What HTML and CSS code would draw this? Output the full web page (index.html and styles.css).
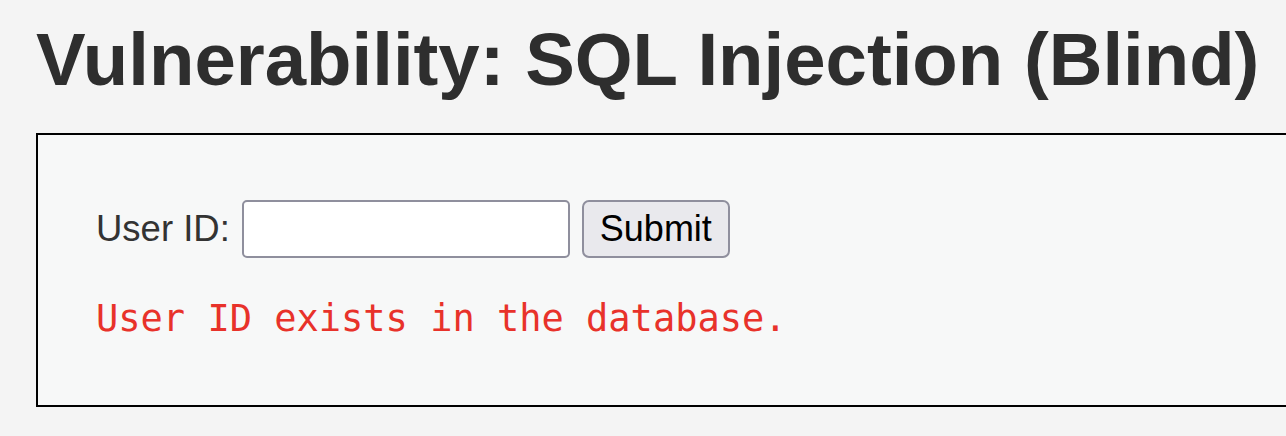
FILE: index.html
```html
<!DOCTYPE html>
<html>
<head>
<meta charset="utf-8">
<link rel="stylesheet" href="styles.css">
</head>
<body>
<div class="page">
  <h1 class="title">Vulnerability: SQL Injection (Blind)</h1>
  <div class="vulnerable-code">
    <form class="form">
      <label class="label" for="uid">User ID:</label>
      <input class="text-input" id="uid" type="text">
      <button class="submit" type="button">Submit</button>
    </form>
    <pre class="result">User ID exists in the database.</pre>
  </div>
</div>
</body>
</html>
```

FILE: styles.css
```css
html, body {
  margin: 0;
  padding: 0;
  background: #f4f4f4;
}
.page {
  padding: 0 0 0 36px;
  font-family: "Liberation Sans", Arial, sans-serif;
  color: #333;
}
.title {
  margin: 0;
  padding-top: 20px;
  height: 133px;
  box-sizing: border-box;
  font-size: 74.4px;
  line-height: 80px;
  font-weight: bold;
  color: #2e2e2e;
  white-space: nowrap;
}
.vulnerable-code {
  border: 2px solid #000;
  border-right: none;
  background: #f7f8f8;
  height: 274px;
  padding: 65px 0 0 58px;
  box-sizing: border-box;
}
.form {
  display: flex;
  align-items: center;
  margin: 0;
}
.label {
  font-size: 36.5px;
  color: #333;
  margin-right: 12px;
}
.text-input {
  width: 328px;
  height: 58px;
  box-sizing: border-box;
  border: 2px solid #8f8f9d;
  border-radius: 5px;
  background: #fff;
  margin: 0 12px 0 0;
}
.submit {
  width: 148px;
  height: 58px;
  box-sizing: border-box;
  border: 2px solid #8f8f9d;
  border-radius: 7px;
  background: #e9e9ed;
  font-family: "Liberation Sans", Arial, sans-serif;
  font-size: 36px;
  color: #000;
  padding: 0;
}
.result {
  margin: 39px 0 0 0;
  font-family: "DejaVu Sans Mono", monospace;
  font-size: 37px;
  line-height: 44px;
  color: #e8322a;
}
```
